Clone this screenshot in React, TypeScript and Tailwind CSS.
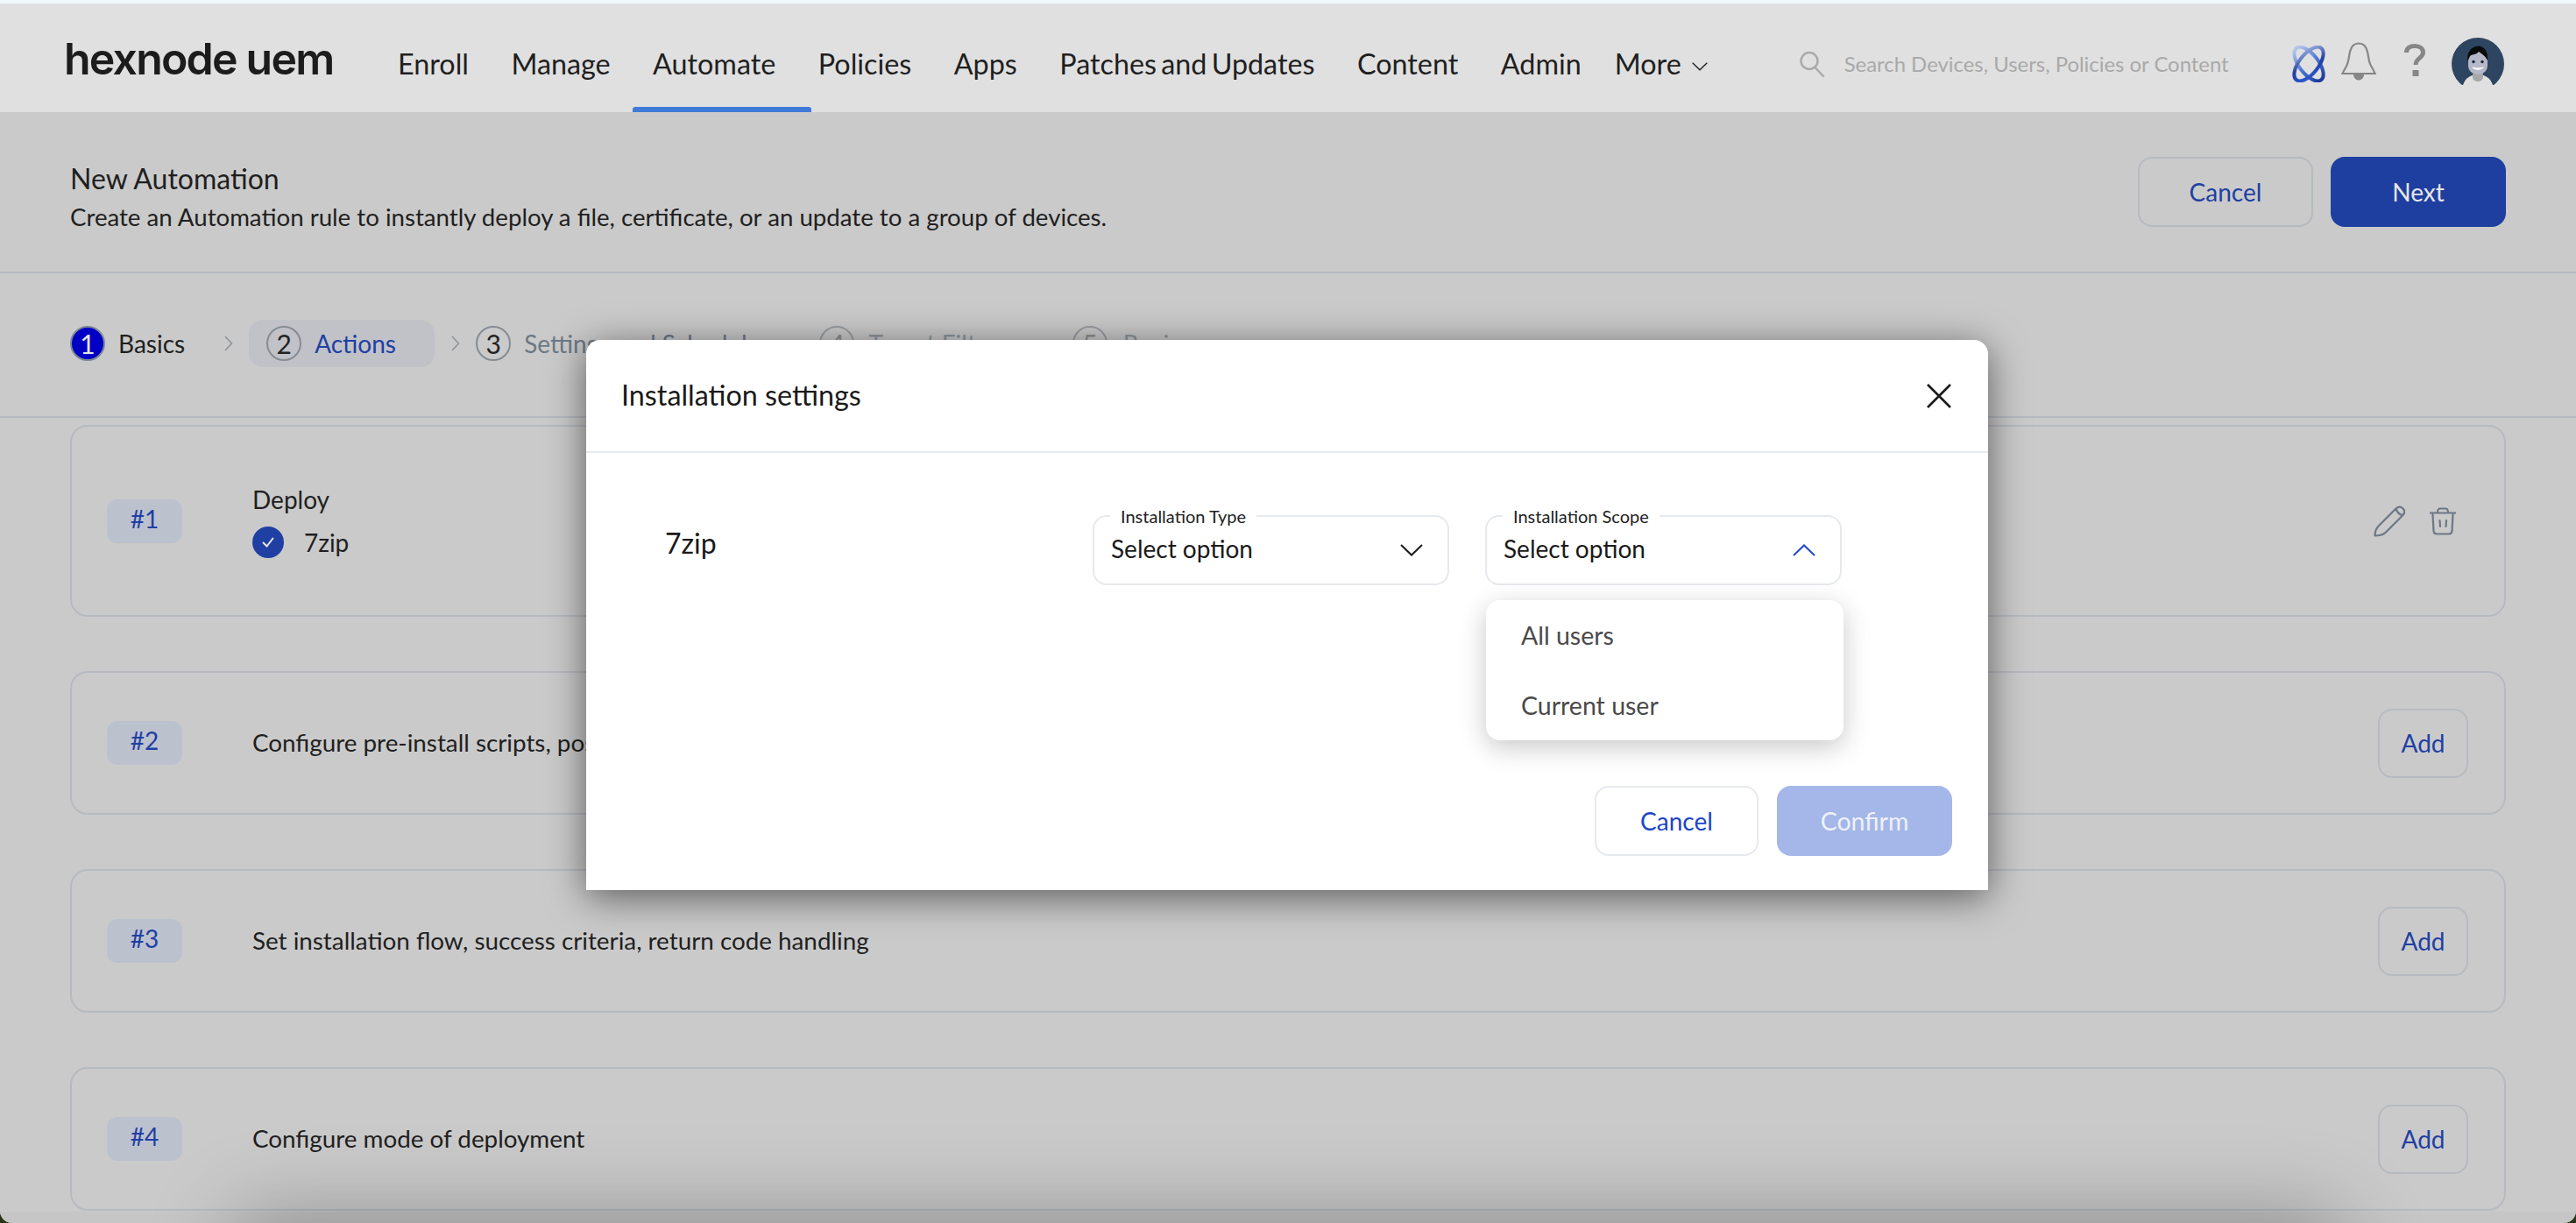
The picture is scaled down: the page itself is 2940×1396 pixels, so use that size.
const font = "font-['Lato',sans-serif]";

const navItems = ["Enroll", "Manage", "Automate", "Policies", "Apps", "Patches and Updates", "Content", "Admin"];

function SearchIcon() {
  return (
    <svg viewBox="0 0 30 30" className="w-[30px] h-[30px] shrink-0" fill="none" stroke="#a9a9a9" strokeWidth="2.4" strokeLinecap="round">
      <circle cx="12" cy="11.5" r="9.5" />
      <path d="M18.5 19 L28 29" />
    </svg>
  );
}

function AtomIcon() {
  return (
    <svg viewBox="0 0 42 42" className="w-[42px] h-[42px] shrink-0" fill="none" strokeWidth="4">
      <defs>
        <linearGradient id="atomA" x1="0" y1="0" x2="0" y2="1">
          <stop offset="0" stopColor="#b4c6ec" />
          <stop offset="0.5" stopColor="#4f78d8" />
          <stop offset="1" stopColor="#1e3c9c" />
        </linearGradient>
        <linearGradient id="atomB" x1="0" y1="0" x2="1" y2="1">
          <stop offset="0" stopColor="#a8bdea" />
          <stop offset="0.55" stopColor="#1f3f9e" />
          <stop offset="1" stopColor="#2f5ede" />
        </linearGradient>
      </defs>
      <ellipse cx="21" cy="21" rx="11" ry="23" transform="rotate(-38 21 21)" stroke="url(#atomA)" />
      <ellipse cx="21" cy="21" rx="11" ry="23" transform="rotate(38 21 21)" stroke="url(#atomB)" />
    </svg>
  );
}

function BellIcon() {
  return (
    <svg viewBox="0 0 40 44" className="w-[40px] h-[44px] shrink-0" fill="none" stroke="#868686" strokeWidth="2.2" strokeLinecap="round">
      <path d="M7 25 C9 20 9 15 10 11 C11.5 4.5 15 1.5 20 1.5 C25 1.5 28.5 4.5 30 11 C31 15 31 20 33 25 C34 28 37 31 38 35" />
      <path d="M7 25 C6 29 3 32 2 35" />
      <path d="M1 36 H39" />
      <path d="M14 37 C14 41 17 43.5 20 43.5 C23 43.5 26 41 26 37 Z" fill="#868686" stroke="none" />
    </svg>
  );
}

function HelpIcon() {
  return (
    <svg viewBox="0 0 24 37" className="w-[24px] h-[37px] shrink-0" fill="none">
      <path d="M2.5 10 C2.5 5 6.5 2.5 12 2.5 C17.5 2.5 21.5 5.5 21.5 10 C21.5 16 13 16.5 13 24" stroke="#868686" strokeWidth="5" />
      <rect x="9.5" y="30" width="7" height="7" fill="#868686" />
    </svg>
  );
}

function Avatar() {
  return (
    <svg viewBox="0 0 60 60" className="w-[60px] h-[60px] shrink-0">
      <defs>
        <clipPath id="avatarClip">
          <path d="M0 0 H60 V54 H0 Z" />
        </clipPath>
      </defs>
      <circle cx="30" cy="30" r="30" fill="#2d4560" clipPath="url(#avatarClip)" />
      <path d="M13 54 C16 45 23 42 30 42 C37 42 44 45 47 54 C42 60 18 60 13 54 Z" fill="#e0e0e0" />
      <rect x="24" y="38" width="12" height="12" rx="5" fill="#a8a8a8" />
      <rect x="19" y="14" width="22" height="28" rx="10" fill="#b4b8c8" />
      <path d="M18.5 27 C17 17 22 10 31 9.5 C38 10 42 17 41 26 C38 20 35 19 31 16 C28 20 22 19 21 21 Z" fill="#0a0a0a" />
      <circle cx="25" cy="27.5" r="1.7" fill="#1a2430" />
      <circle cx="35" cy="27.5" r="1.7" fill="#1a2430" />
      <path d="M24 34 C27 37 33 37 36 34 C33 35 27 35 24 34 Z" fill="#f4f4f4" stroke="#f4f4f4" strokeWidth="1.5" />
    </svg>
  );
}

function Chevron({ up, color, className }: { up?: boolean; color: string; className: string }) {
  return (
    <svg viewBox="0 0 26 14" className={className} fill="none" stroke={color} strokeWidth="2">
      <path d={up ? "M1 13 L13 1.5 L25 13" : "M1 1 L13 12.5 L25 1"} />
    </svg>
  );
}

function StepArrow() {
  return (
    <svg viewBox="0 0 10 18" className="w-[10px] h-[18px] shrink-0" fill="none" stroke="#8e949b" strokeWidth="1.6">
      <path d="M1 1 L8.5 9 L1 17" />
    </svg>
  );
}

function StepCircle({ n, active, faded }: { n: number; active?: boolean; faded?: boolean }) {
  if (active) {
    return (
      <span className="flex items-center justify-center w-[40px] h-[40px] shrink-0 rounded-full bg-[#0000c4] border-2 border-[#7c8794] text-[#e6e6e6] text-[30px]">
        {n}
      </span>
    );
  }
  return (
    <span
      className={
        faded
          ? "flex items-center justify-center w-[40px] h-[40px] shrink-0 rounded-full border-2 border-[#9a9ea3] text-[#8f8f8f] text-[30px]"
          : "flex items-center justify-center w-[40px] h-[40px] shrink-0 rounded-full border-2 border-[#868c93] text-[#222222] text-[30px]"
      }
    >
      {n}
    </span>
  );
}

function Stepper() {
  return (
    <div className="h-[165px] border-b-2 border-[#b6babf] pl-[80px] pt-[53px] flex items-start">
      <div className="h-[54px] flex items-center gap-[15px]">
        <StepCircle n={1} active />
        <span className="text-[28px] text-[#1f1f1f]">Basics</span>
      </div>
      <div className="h-[54px] flex items-center ml-[45px]"><StepArrow /></div>
      <div className="h-[54px] w-[212px] ml-[18px] pl-[20px] flex items-center gap-[15px] rounded-[16px] bg-[#c0c2c8]">
        <StepCircle n={2} />
        <span className="text-[28px] text-[#1f3fa3]">Actions</span>
      </div>
      <div className="h-[54px] flex items-center ml-[19px]"><StepArrow /></div>
      <div className="h-[54px] flex items-center gap-[15px] ml-[18px]">
        <StepCircle n={3} />
        <span className="text-[28px] text-[#6c7885] whitespace-nowrap">Settings and Schedule</span>
      </div>
      <div className="h-[54px] flex items-center gap-[16px] ml-[68px]">
        <StepCircle n={4} faded />
        <span className="text-[28px] text-[#8f969c] whitespace-nowrap">Target Filter</span>
      </div>
      <div className="h-[54px] flex items-center gap-[18px] ml-[85px]">
        <StepCircle n={5} faded />
        <span className="text-[28px] text-[#8f969c]">Review</span>
      </div>
    </div>
  );
}

function Badge({ n }: { n: number }) {
  return (
    <span className="flex items-center justify-center w-[86px] h-[50px] pb-[6px] shrink-0 rounded-[12px] bg-[#bcc1ce] text-[28px] text-[#1f3fa3]">
      #{n}
    </span>
  );
}

function ActionCard({ n, text }: { n: number; text: string }) {
  return (
    <div className="h-[164px] flex items-center pl-[40px] pr-[41px] border-2 border-[#b6babf] rounded-[20px]">
      <Badge n={n} />
      <span className="ml-[80px] flex-1 text-[27.8px] text-[#1f1f1f]">{text}</span>
      <button className="w-[103px] h-[79px] rounded-[16px] border-2 border-[#b6babf] text-[28px] text-[#1f3fa3]">Add</button>
    </div>
  );
}

function DeployCard() {
  return (
    <div className="h-[219px] flex items-center pl-[40px] pr-[55px] border-2 border-[#b6babf] rounded-[20px]">
      <Badge n={1} />
      <div className="ml-[80px] flex-1 flex flex-col gap-[9px] pt-[2px]">
        <span className="text-[28px] leading-[38px] text-[#1f1f1f]">Deploy</span>
        <div className="flex items-center gap-[23px]">
          <span className="flex items-center justify-center w-[36px] h-[36px] rounded-full bg-[#1f3fa3]">
            <svg viewBox="0 0 18 18" className="w-[18px] h-[18px]" fill="none" stroke="#e8e8e8" strokeWidth="2" strokeLinecap="round">
              <path d="M3.5 9.5 L7.5 13.5 L14.5 4.5" />
            </svg>
          </span>
          <span className="text-[28px] text-[#1f1f1f]">7zip</span>
        </div>
      </div>
      <div className="flex items-center gap-[28px]">
        <svg viewBox="0 0 36 36" className="w-[36px] h-[36px]" fill="none" stroke="#6b7785" strokeWidth="2.2" strokeLinejoin="round">
          <path d="M1.5 34.5 C1.5 30 3 26 6 23 L25 4 C28 1 31 1 33.5 3.5 C36 6 35.5 9 33 11.5 L14 30.5 C11 33.5 6 34.5 1.5 34.5 Z" />
          <path d="M25.5 4 C27 8 29 10 33 11" />
        </svg>
        <svg viewBox="0 0 30 32" className="w-[30px] h-[32px]" fill="none" stroke="#6b7785" strokeWidth="2.2" strokeLinecap="round">
          <path d="M0.5 6.5 H29.5" />
          <path d="M9 6 C9 2.5 10 1.5 12 1.5 H18 C20 1.5 21 2.5 21 6" />
          <path d="M3.5 8 L4.5 27 C4.7 29.5 6 30.5 8 30.5 H22 C24 30.5 25.3 29.5 25.5 27 L26.5 8" />
          <path d="M11.5 15 L12 22 M19 15 L18.5 22" />
        </svg>
      </div>
    </div>
  );
}

function SelectField({ label, up }: { label: string; up?: boolean }) {
  return (
    <div className="relative w-[407px] h-[80px] pl-[19px] pr-[28px] flex items-center justify-between border-2 border-[#e6e9ed] rounded-[16px]">
      <span className="absolute left-[18px] top-[-14px] px-[12px] bg-white text-[20px] leading-[26px] text-[#222222]">{label}</span>
      <span className="text-[28px] text-[#1a1a1a] pb-[4px]">Select option</span>
      <Chevron up={up} color={up ? "#2347d0" : "#1a1a1a"} className="w-[26px] h-[14px] shrink-0" />
    </div>
  );
}

function InstallModal() {
  return (
    <div className="absolute left-[669px] top-[388px] w-[1600px] h-[628px] bg-white rounded-t-[16px] shadow-[0_8px_44px_rgba(0,0,0,0.55)] flex flex-col">
      <div className="h-[129px] shrink-0 border-b-2 border-[#e6e9ed] pl-[40px] pr-[42px] flex items-center justify-between">
        <span className="text-[32.3px] text-[#1a1a1a]">Installation settings</span>
        <svg viewBox="0 0 28 28" className="w-[28px] h-[28px]" fill="none" stroke="#1a1a1a" strokeWidth="2.6">
          <path d="M1 1 L27 27 M27 1 L1 27" />
        </svg>
      </div>
      <div className="flex items-start pt-[71px] pl-[90px]">
        <span className="w-[488px] text-[32px] text-[#1a1a1a] pt-[8px]">7zip</span>
        <div className="flex gap-[41px]">
          <SelectField label="Installation Type" />
          <SelectField label="Installation Scope" up />
        </div>
      </div>
      <div className="absolute left-[1027px] top-[297px] w-[408px] h-[160px] bg-white rounded-[16px] shadow-[0_8px_30px_rgba(0,0,0,0.22)] flex flex-col justify-center gap-[40px] pl-[40px] text-[28.5px] leading-[40px] text-[#4a4a4a]">
        <span>All users</span>
        <span>Current user</span>
      </div>
      <div className="mt-auto pb-[39px] pr-[41px] flex justify-end gap-[21px]">
        <button className="w-[187px] h-[80px] rounded-[16px] border-2 border-[#e6e9ed] text-[28px] text-[#1d44c8]">Cancel</button>
        <button className="w-[200px] h-[80px] rounded-[16px] bg-[#a5b7e8] text-[28.5px] text-[#eef1fb]">Confirm</button>
      </div>
    </div>
  );
}

export default function App() {
  return (
    <div className="w-[2940px] h-[1396px] overflow-hidden bg-[#2a3518]">
      <div className={`relative w-[2940px] h-[1396px] overflow-hidden rounded-b-[14px] bg-[#cacaca] ${font}`}>
        <div className="h-[4px] bg-[#eff8fa]" />
        <nav className="relative h-[124px] bg-[#e0e0e0] flex items-center pl-[73px] pr-[82px]">
          <span className="w-[381px] shrink-0 font-['Inter',sans-serif] font-semibold text-[50px] tracking-[-1.8px] text-[#1c1c1c] pt-[3px]">hexnode uem</span>
          <div className="flex items-center gap-[48.5px] [word-spacing:-3px] text-[32.3px] text-[#1f1f1f] pt-[14px]">
            {navItems.map((item) => (
              <span key={item} className="whitespace-nowrap">{item}</span>
            ))}
          </div>
          <div className="flex items-center gap-[12px] ml-[38px] text-[32.3px] text-[#1f1f1f] pt-[14px]">
            <span>More</span>
            <Chevron color="#1f1f1f" className="w-[18px] h-[10px] mt-[6px]" />
          </div>
          <div className="flex items-center gap-[22px] ml-[104px] pt-[14px]">
            <SearchIcon />
            <span className="text-[23.9px] text-[#a9a9a9] whitespace-nowrap">Search Devices, Users, Policies or Content</span>
          </div>
          <div className="ml-auto flex items-center pt-[13px]">
            <AtomIcon />
            <span className="ml-[16px] mb-[5px]"><BellIcon /></span>
            <span className="ml-[32px] mb-[8px]"><HelpIcon /></span>
            <span className="ml-[30px]"><Avatar /></span>
          </div>
          <span className="absolute left-[722px] bottom-0 w-[204px] h-[6px] rounded-t-[3px] bg-[#3f7bd9]" />
        </nav>
        <header className="h-[184px] border-b-2 border-[#b6babf] pl-[80px] pr-[80px] flex items-center justify-between">
          <div className="flex flex-col gap-[4px] pt-[12px]">
            <span className="text-[32px] leading-[42px] text-[#1f1f1f]">New Automation</span>
            <span className="text-[27.65px] leading-[38px] text-[#1f1f1f]">Create an Automation rule to instantly deploy a file, certificate, or an update to a group of devices.</span>
          </div>
          <div className="flex gap-[20px]">
            <button className="w-[200px] h-[80px] rounded-[16px] border-2 border-[#b6babf] text-[28px] text-[#1f3fa3]">Cancel</button>
            <button className="w-[200px] h-[80px] rounded-[16px] bg-[#1e3fa0] text-[28px] text-[#e6e6e6]">Next</button>
          </div>
        </header>
        <Stepper />
        <main className="flex flex-col gap-[62px] pt-[8px] pl-[80px] pr-[80px]">
          <DeployCard />
          <ActionCard n={2} text="Configure pre-install scripts, post-install scripts" />
          <ActionCard n={3} text="Set installation flow, success criteria, return code handling" />
          <ActionCard n={4} text="Configure mode of deployment" />
        </main>
        {/* window bottom edge and the soft shadow rising from it */}
        <div className="absolute left-0 right-0 bottom-0 h-[13px] bg-[#c6c6c6]" />
        <div className="absolute left-[300px] right-[300px] top-[1420px] h-[60px] shadow-[0_0_100px_30px_rgba(0,0,0,0.3)]" />
        <InstallModal />
      </div>
    </div>
  );
}
